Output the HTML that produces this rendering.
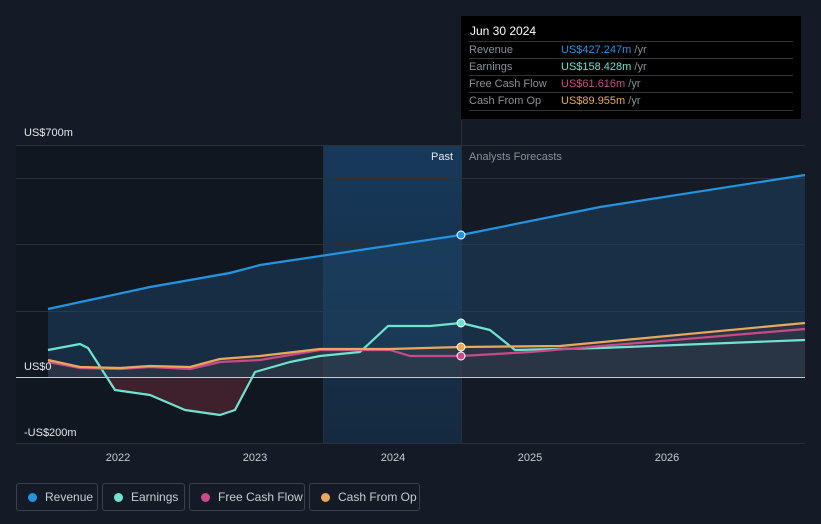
<!DOCTYPE html>
<html><head><meta charset="utf-8"><style>
body{margin:0;width:821px;height:524px;background:#151b26;font-family:"Liberation Sans",sans-serif;overflow:hidden;position:relative}
.tt{position:absolute;left:461px;top:16px;width:340px;height:103px;background:#000;color:#fff;font-size:12px}
.tt .h{position:absolute;left:9px;top:8px}
.row{position:absolute;left:8px;width:324px;height:17px;border-top:1px solid #333;color:#8a8f98;font-size:11px;line-height:17px}
.row span{position:absolute;left:92px}
.row i{font-style:normal;color:#8a8f98}
.leg{position:absolute;top:483px;height:28px;border:1px solid #3a404c;border-radius:3px;color:#c8ccd2;font-size:12px;line-height:26px;box-sizing:border-box}
.leg b{position:absolute;left:11px;top:9px;width:9px;height:9px;border-radius:50%}
.leg s{text-decoration:none;position:absolute;left:43px}
</style></head><body>
<svg width="821" height="524" style="position:absolute;left:0;top:0">
<defs><linearGradient id="g" x1="0" y1="0" x2="0" y2="1"><stop offset="0" stop-color="#17395a"/><stop offset="1" stop-color="#152a40"/></linearGradient></defs>
<rect x="16" y="145" width="307" height="298" fill="#111720"/>
<rect x="323" y="145" width="138" height="298" fill="url(#g)"/>
<g stroke="#2a303b" stroke-width="1">
<line x1="16" y1="145.5" x2="805" y2="145.5"/><line x1="16" y1="178.5" x2="805" y2="178.5"/><line x1="16" y1="244.5" x2="805" y2="244.5"/><line x1="16" y1="311.5" x2="805" y2="311.5"/><line x1="16" y1="443.5" x2="805" y2="443.5"/>
<line x1="323.5" y1="145" x2="323.5" y2="443"/><line x1="461.5" y1="120" x2="461.5" y2="443"/></g>
<path d="M48,309 L150,287 L260,265 L461,235 L600,207 L805,175 L805,377 L48,377Z" fill="#1d4366" opacity=".5"/>
<path d="M48,360 L80,367 L120,368 L150,366 L190,367 L220,359 L260,356 L320,349 L390,349 L461,347 L560,346 L805,323 L805,377 L48,377Z" fill="#3a3c44" opacity=".5"/>
<path d="M48,377 L105,377 L115,390 L150,395 L185,410 L220,415 L235,410 L250,377Z" fill="#4a2430" opacity=".8"/>
<line x1="16" y1="377.5" x2="805" y2="377.5" stroke="#c8ccd2" stroke-width="1"/>
<g fill="none" stroke-width="2.2" stroke-linejoin="round">
<path d="M48,309 L150,287 L230,273 L260,265 L461,235 L600,207 L805,175" stroke="#2394df"/>
<path d="M48,350 L80,344 L88,348 L115,390 L150,395 L185,410 L220,415 L235,410 L255,372 L290,362 L320,356 L360,352 L388,326 L430,326 L461,323 L490,330 L515,350 L600,348 L805,340" stroke="#6fe3cf"/>
<path d="M48,362 L80,368 L120,369 L150,367 L190,369 L220,362 L260,360 L320,350 L390,350 L410,356 L461,356 L530,352 L805,329" stroke="#c94a8a"/>
<path d="M48,360 L80,367 L120,368 L150,366 L190,367 L220,359 L260,356 L320,349 L390,349 L461,347 L560,346 L805,323" stroke="#e8a95a"/>
</g>
<circle cx="461" cy="235" r="4" fill="#2394df" stroke="#fff" stroke-width="1"/>
<circle cx="461" cy="323" r="4" fill="#6fe3cf" stroke="#fff" stroke-width="1"/>
<circle cx="461" cy="356" r="4" fill="#c94a8a" stroke="#fff" stroke-width="1"/>
<circle cx="461" cy="347" r="4" fill="#e8a95a" stroke="#fff" stroke-width="1"/>
<g font-family="Liberation Sans,sans-serif" font-size="11" fill="#e6e8eb">
<text x="24" y="136">US$700m</text><text x="24" y="370">US$0</text><text x="24" y="436">-US$200m</text>
<text x="453" y="160" text-anchor="end">Past</text><text x="469" y="160" fill="#8a8f98">Analysts Forecasts</text>
<g fill="#c8ccd2"><text x="118" y="461" text-anchor="middle">2022</text><text x="255" y="461" text-anchor="middle">2023</text><text x="393" y="461" text-anchor="middle">2024</text><text x="530" y="461" text-anchor="middle">2025</text><text x="667" y="461" text-anchor="middle">2026</text></g>
</g>
</svg>
<div class="tt"><div class="h">Jun 30 2024</div>
<div class="row" style="top:25px">Revenue<span style="color:#2394df">US$427.247m <i>/yr</i></span></div>
<div class="row" style="top:42px">Earnings<span style="color:#6fe3cf">US$158.428m <i>/yr</i></span></div>
<div class="row" style="top:59px">Free Cash Flow<span style="color:#c94a8a">US$61.616m <i>/yr</i></span></div>
<div class="row" style="top:76px">Cash From Op<span style="color:#e8a95a">US$89.955m <i>/yr</i></span></div>
<div class="row" style="top:94px;height:0"></div>
</div>
<div class="leg" style="left:16px;width:82px"><b style="background:#2394df"></b><s style="left:28px">Revenue</s></div>
<div class="leg" style="left:102px;width:83px"><b style="background:#6fe3cf"></b><s style="left:28px">Earnings</s></div>
<div class="leg" style="left:189px;width:116px"><b style="background:#c94a8a"></b><s style="left:28px">Free Cash Flow</s></div>
<div class="leg" style="left:309px;width:111px"><b style="background:#e8a95a"></b><s style="left:28px">Cash From Op</s></div>
</body></html>
